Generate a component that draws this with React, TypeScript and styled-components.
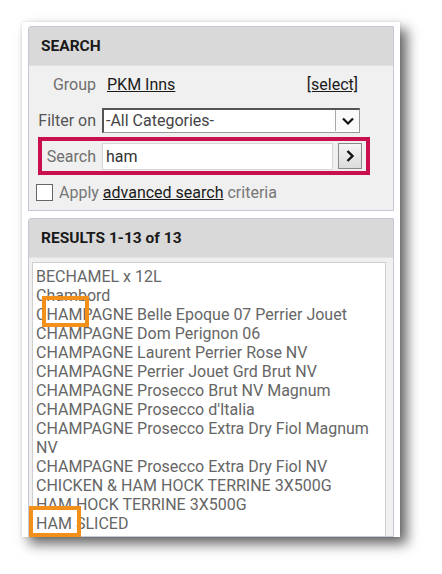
import React from "react";
import styled, { createGlobalStyle } from "styled-components";

const GlobalStyle = createGlobalStyle`
  html, body {
    margin: 0;
    background: #fff;
  }
  body {
    font-family: Roboto, "Liberation Sans", sans-serif;
  }
`;

const results = [
  "BECHAMEL x 12L",
  "Chambord",
  "CHAMPAGNE Belle Epoque 07 Perrier Jouet",
  "CHAMPAGNE Dom Perignon 06",
  "CHAMPAGNE Laurent Perrier Rose NV",
  "CHAMPAGNE Perrier Jouet Grd Brut NV",
  "CHAMPAGNE Prosecco Brut NV Magnum",
  "CHAMPAGNE Prosecco d'Italia",
  "CHAMPAGNE Prosecco Extra Dry Fiol Magnum NV",
  "CHAMPAGNE Prosecco Extra Dry Fiol NV",
  "CHICKEN & HAM HOCK TERRINE 3X500G",
  "HAM HOCK TERRINE 3X500G",
  "HAM SLICED",
];

export default function App() {
  return (
    <Page>
      <GlobalStyle />
      <Card>
        <Panel>
          <PanelHeader>SEARCH</PanelHeader>
          <PanelBody>
            <Row>
              <Label>Group</Label>
              <GroupValue>
                <Link>PKM Inns</Link>
                <Link>[select]</Link>
              </GroupValue>
            </Row>
            <Row>
              <Label $dark>Filter on</Label>
              <Select>
                <SelectText>-All Categories-</SelectText>
                <DropButton>
                  <svg width="14" height="10" viewBox="0 0 14 10">
                    <path d="M2 2.5 L7 7.5 L12 2.5" fill="none" stroke="#111" strokeWidth="2.2" />
                  </svg>
                </DropButton>
              </Select>
            </Row>
            <SearchBox>
              <SearchLabel>Search</SearchLabel>
              <SearchInput>ham</SearchInput>
              <GoButton>
                <svg width="10" height="14" viewBox="0 0 10 14">
                  <path d="M2.5 2 L7.5 7 L2.5 12" fill="none" stroke="#111" strokeWidth="2.4" />
                </svg>
              </GoButton>
            </SearchBox>
            <CheckRow>
              <Checkbox />
              <span>
                Apply <Link>advanced search</Link> criteria
              </span>
            </CheckRow>
          </PanelBody>
        </Panel>
        <ResultsPanel>
          <PanelHeader>RESULTS 1-13 of 13</PanelHeader>
          <ResultList>
            {results.map((r) => (
              <Item key={r}>{r}</Item>
            ))}
          </ResultList>
        </ResultsPanel>
        <Highlight style={{ left: 20, top: 274, width: 47, height: 31 }} />
        <Highlight style={{ left: 7, top: 484, width: 52, height: 31 }} />
      </Card>
    </Page>
  );
}

const Page = styled.div`
  padding: 22px 0 0 22px;
  height: 574px;
  box-sizing: border-box;
`;

const Card = styled.div`
  position: relative;
  width: 378px;
  height: 515px;
  box-sizing: border-box;
  padding: 4px 6px 0 6px;
  background: #fff;
  overflow: hidden;
  display: flex;
  flex-direction: column;
  gap: 7px;
  box-shadow: 7px 7px 12px rgba(0, 0, 0, 0.6), 0 0 3px rgba(0, 0, 0, 0.12);
`;

const Panel = styled.div`
  border: 1px solid #c4c9d9;
  background: #f0f0f0;
  border-top-left-radius: 3px;
`;

const ResultsPanel = styled(Panel)`
  flex: 1;
  display: flex;
  flex-direction: column;
  min-height: 0;
`;

const PanelHeader = styled.div`
  height: 38px;
  background: #d9d9d9;
  display: flex;
  align-items: center;
  padding-left: 12px;
  font-weight: 700;
  font-size: 15.5px;
  color: #1a1a1a;
  border-bottom: 1px solid #e2e2e2;
`;

const PanelBody = styled.div`
  padding: 0 0 8px 0;
  display: flex;
  flex-direction: column;
`;

const Row = styled.div`
  display: flex;
  align-items: center;
  height: 36px;
`;

const Label = styled.div<{ $dark?: boolean }>`
  width: 67px;
  text-align: right;
  padding-right: 6px;
  flex-shrink: 0;
  font-size: 16px;
  color: ${(p) => (p.$dark ? "#555" : "#6e6e6e")};
`;

const SearchLabel = styled(Label)`
  width: 54px;
`;

const GroupValue = styled.div`
  display: flex;
  justify-content: space-between;
  width: 251px;
  padding-left: 5px;
  font-size: 16px;
`;

const Link = styled.span`
  color: #1a1a1a;
  text-decoration: underline;
`;

const Select = styled.div`
  display: flex;
  align-items: center;
  width: 258px;
  height: 25px;
  box-sizing: border-box;
  background: #fff;
  border: 1px solid #999;
  border-top: 2px solid #555;
  border-left: 2px solid #555;
`;

const SelectText = styled.div`
  flex: 1;
  padding-left: 2px;
  font-size: 16px;
  color: #444;
`;

const DropButton = styled.div`
  width: 24px;
  height: 21px;
  box-sizing: border-box;
  border-left: 1px solid #aaa;
  display: flex;
  align-items: center;
  justify-content: center;
  background: #fafafa;
`;

const SearchBox = styled.div`
  display: flex;
  align-items: center;
  margin: -1px 0 0 9px;
  width: 332px;
  height: 38px;
  box-sizing: border-box;
  border: 4px solid #c90f50;
`;

const SearchInput = styled.div`
  width: 231px;
  height: 27px;
  box-sizing: border-box;
  background: #fff;
  border: 1px solid #d6d6d6;
  padding-left: 3px;
  display: flex;
  align-items: center;
  font-size: 16px;
  color: #333;
`;

const GoButton = styled.div`
  margin-left: 5px;
  width: 24px;
  height: 26px;
  box-sizing: border-box;
  border: 1px solid #8a8a8a;
  background: linear-gradient(#f4f4f4, #dcdcdc);
  display: flex;
  align-items: center;
  justify-content: center;
`;

const CheckRow = styled.div`
  display: flex;
  align-items: center;
  gap: 6px;
  margin: 8px 0 0 7px;
  font-size: 16px;
  color: #777;
`;

const Checkbox = styled.div`
  width: 17px;
  height: 17px;
  box-sizing: border-box;
  border: 1px solid #666;
  background: #fff;
`;

const ResultList = styled.div`
  flex: 1;
  margin: 4px 7px 0 3px;
  background: #fff;
  border: 1px solid #cfcfcf;
  border-bottom: none;
  padding: 4px 3px 0 3px;
`;

const Item = styled.div`
  font-size: 16px;
  line-height: 19px;
  color: #666;
`;

const Highlight = styled.div`
  position: absolute;
  box-sizing: border-box;
  border: 4px solid #f39019;
`;
